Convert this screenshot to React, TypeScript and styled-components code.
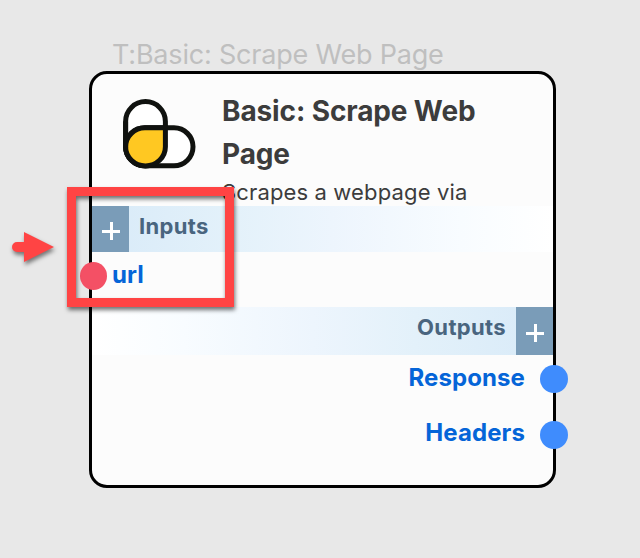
import React from "react";
import styled, { createGlobalStyle } from "styled-components";

const GlobalStyle = createGlobalStyle`
  * { box-sizing: border-box; }
  body { margin: 0; background: #e8e8e8; font-family: Inter, "Liberation Sans", sans-serif; }
`;

const Canvas = styled.main`
  position: relative;
  width: 640px;
  height: 558px;
  overflow: hidden;
  background: #e8e8e8;
  padding: 38px 84px 0 89px;
`;

const Caption = styled.div`
  height: 33px;
  padding-left: 23px;
  font-size: 27px;
  line-height: 34px;
  font-weight: 380;
  letter-spacing: -0.2px;
  color: #bfbfbf;
  white-space: nowrap;
`;

const Node = styled.section`
  display: flex;
  flex-direction: column;
  width: 467px;
  height: 416.5px;
  border: 3px solid #000;
  border-radius: 18px;
  background: #fcfcfc;
`;

const Header = styled.header`
  display: flex;
  height: 132px;
  padding: 16px 0 0 30px;
  overflow: hidden;
`;

const Logo = styled.svg`
  flex: none;
  width: 76px;
  height: 72px;
  margin: 8px 24px 0 0;
`;

const Heading = styled.div`
  flex: none;
  width: 290px;
`;

const Title = styled.h1`
  margin: 0;
  font-size: 28px;
  line-height: 43px;
  font-weight: 700;
  letter-spacing: -0.12px;
  color: #3c3c3c;
`;

const Description = styled.p`
  margin: 0;
  font-size: 22px;
  line-height: 32px;
  letter-spacing: 0.14px;
  color: #3c3c3c;
  white-space: nowrap;
`;

const Band = styled.div<{ $side: "left" | "right" }>`
  display: flex;
  flex: none;
  flex-direction: ${(p) => (p.$side === "left" ? "row" : "row-reverse")};
  height: ${(p) => (p.$side === "left" ? 46 : 48)}px;
  background: linear-gradient(
    to ${(p) => (p.$side === "left" ? "right" : "left")},
    #d8eaf8 0%, #e3f1fa 30%, #edf5fd 52%, #f8fcff 80%, #ffffff 100%
  );
`;

const AddButton = styled.button`
  display: flex;
  align-items: center;
  justify-content: center;
  width: 37px;
  height: 100%;
  padding: 4px 0 0;
  border: 0;
  background: #7a9cb8;
  color: #fff;
`;

const BandLabel = styled.span`
  padding: 0 10px;
  font-size: 22px;
  line-height: 41px;
  font-weight: 700;
  letter-spacing: 0.35px;
  color: #49657f;
`;

const Port = styled.div<{ $side: "left" | "right"; $height: number }>`
  display: flex;
  flex: none;
  flex-direction: ${(p) => (p.$side === "left" ? "row" : "row-reverse")};
  align-items: flex-start;
  gap: ${(p) => (p.$side === "left" ? 5 : 15)}px;
  height: ${(p) => p.$height}px;
  margin: ${(p) => (p.$side === "left" ? "0 0 0 -12px" : "0 -15px 0 0")};
`;

const Dot = styled.span<{ $color: string; $width: number; $top?: number }>`
  width: ${(p) => p.$width}px;
  height: 28px;
  margin-top: ${(p) => p.$top ?? 10}px;
  border-radius: 50%;
  background: ${(p) => p.$color};
`;

const PortLabel = styled.span`
  font-size: 24px;
  line-height: 46px;
  font-weight: 700;
  letter-spacing: 0.1px;
  color: #0565d8;
`;

const Highlight = styled.div`
  position: absolute;
  left: 67px;
  top: 187px;
  width: 167px;
  height: 120px;
  border: 9px solid #ff4444;
  filter: drop-shadow(1px 3px 2px rgba(0, 0, 0, 0.55));
`;

const Arrow = styled.svg`
  position: absolute;
  left: 6px;
  top: 226px;
  width: 54px;
  height: 46px;
  filter: drop-shadow(1px 3px 2px rgba(0, 0, 0, 0.5));
`;

function Plus() {
  return (
    <svg width="20" height="20" viewBox="0 0 20 20" aria-hidden="true">
      <path d="M1 10.5H19M10.5 1V19" stroke="currentColor" strokeWidth="3" />
    </svg>
  );
}

function PillLogo() {
  return (
    <Logo viewBox="0 0 76 72" aria-hidden="true">
      <g stroke="#10120f" strokeWidth="5">
        <rect x="3.6" y="3.6" width="39.8" height="64.2" rx="19.9" fill="#fff" />
        <rect x="3.6" y="29.8" width="67.4" height="38" rx="19" fill="#fff" />
        <path
          d="M23 29.8H43.4V48.8A19.8 19 0 0 1 3.6 48.8A19.4 19 0 0 1 23 29.8Z"
          fill="#ffc822"
        />
        <path d="M3.6 50V23.5" fill="none" />
      </g>
    </Logo>
  );
}

export default function App() {
  return (
    <>
      <GlobalStyle />
      <Canvas>
        <Caption>T:Basic: Scrape Web Page</Caption>
        <Node>
          <Header>
            <PillLogo />
            <Heading>
              <Title>Basic: Scrape Web Page</Title>
              <Description>Scrapes a webpage via</Description>
            </Heading>
          </Header>
          <Band $side="left">
            <AddButton aria-label="Add input"><Plus /></AddButton>
            <BandLabel>Inputs</BandLabel>
          </Band>
          <Port $side="left" $height={55}>
            <Dot $color="#f45065" $width={27} />
            <PortLabel>url</PortLabel>
          </Port>
          <Band $side="right">
            <AddButton aria-label="Add output"><Plus /></AddButton>
            <BandLabel>Outputs</BandLabel>
          </Band>
          <Port $side="right" $height={55}>
            <Dot $color="#3f8cfd" $width={28} />
            <PortLabel>Response</PortLabel>
          </Port>
          <Port $side="right" $height={55}>
            <Dot $color="#3f8cfd" $width={28} $top={11} />
            <PortLabel>Headers</PortLabel>
          </Port>
        </Node>
        <Highlight />
        <Arrow viewBox="0 0 54 46" aria-hidden="true">
          <path d="M11 16H18V6L48 21L18 36V26H11A5 5 0 0 1 11 16Z" fill="#ff4444" />
        </Arrow>
      </Canvas>
    </>
  );
}
